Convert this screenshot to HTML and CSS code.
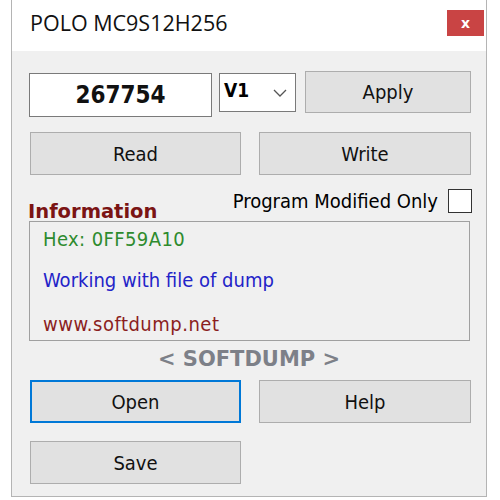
FILE: index.html
```html
<!DOCTYPE html>
<html>
<head>
<meta charset="utf-8">
<link rel="stylesheet" href="styles.css">
</head>
<body>
<div class="window">
  <div class="titlebar">
    <span class="title">POLO MC9S12H256</span>
    <span class="close">x</span>
  </div>
  <div class="content">
    <div class="row1">
      <div class="code">267754</div>
      <div class="select"><span>V1</span>
        <svg width="14" height="8" viewBox="0 0 14 8"><path d="M1 1 L7 7 L13 1" fill="none" stroke="#555" stroke-width="1.3"/></svg>
      </div>
      <div class="btn apply">Apply</div>
    </div>
    <div class="row2">
      <div class="btn">Read</div>
      <div class="btn">Write</div>
    </div>
    <div class="optrow">
      <span class="optlabel">Program Modified Only</span>
      <span class="check"></span>
    </div>
    <div class="info">
      <span class="infolabel">Information</span>
      <div class="infobox">
        <div class="hex">Hex: 0FF59A10</div>
        <div class="msg">Working with file of dump</div>
        <div class="url">www.softdump.net</div>
      </div>
    </div>
    <div class="brand">&lt; SOFTDUMP &gt;</div>
    <div class="row2 rowopen">
      <div class="btn focus">Open</div>
      <div class="btn">Help</div>
    </div>
    <div class="row2 rowsave">
      <div class="btn">Save</div>
    </div>
  </div>
</div>
</body>
</html>
```
FILE: styles.css
```css
html, body {
  margin: 0;
  padding: 0;
  background: #ffffff;
}
body {
  font-family: "DejaVu Sans Condensed", "DejaVu Sans", sans-serif;
  color: #000;
}
.window {
  margin-left: 11px;
  width: 474px;
  height: 496px;
  border: 1px solid #b4b4b4;
  border-top: none;
  background: #f0f0f0;
  display: flex;
  flex-direction: column;
}
.titlebar {
  height: 51px;
  background: #ffffff;
  display: flex;
  align-items: flex-start;
  justify-content: space-between;
}
.title {
  font-family: "Open Sans", "Noto Sans", sans-serif;
  font-size: 21.5px;
  margin-left: 18px;
  margin-top: 8px;
  color: #111;
}
.close {
  width: 37px;
  height: 26px;
  margin-top: 10px;
  margin-right: 2px;
  background: #c94444;
  color: #fff;
  font-family: "DejaVu Sans", sans-serif;
  font-weight: bold;
  font-size: 14px;
  display: flex;
  align-items: center;
  justify-content: center;
}
.content {
  padding: 20px 15px 0 17px;
}
.row1 {
  display: flex;
  align-items: flex-start;
  height: 46px;
}
.code {
  width: 181px;
  height: 42px;
  margin-top: 2px;
  background: #fff;
  border: 1px solid #7a7a7a;
  display: flex;
  align-items: center;
  justify-content: center;
  font-weight: bold;
  font-size: 24px;
  color: #111;
}
.select {
  margin-top: 2px;
  margin-left: 7px;
  background: #fff;
  border: 1px solid #7a7a7a;
  display: flex;
  align-items: center;
  justify-content: space-between;
  padding: 0 8px 0 4px;
  box-sizing: border-box;
  width: 77px;
  height: 39px;
  font-weight: bold;
  font-size: 19px;
}
.select span { margin-top: -6px; }
.btn {
  background: #e1e1e1;
  border: 1px solid #adadad;
  box-sizing: border-box;
  height: 43px;
  display: flex;
  align-items: center;
  justify-content: center;
  font-size: 20px;
  color: #111;
}
.apply {
  width: 166px;
  height: 42px;
  margin-left: 9px;
}
.row2 {
  display: grid;
  grid-template-columns: 211px 212px;
  column-gap: 18px;
  margin-top: 15px;
  margin-left: 1px;
}
.optrow {
  display: flex;
  justify-content: flex-end;
  align-items: center;
  margin-top: 14px;
  height: 24px;
  margin-right: -1px;
}
.optlabel {
  font-size: 20px;
  margin-right: 10px;
}
.check {
  width: 22px;
  height: 22px;
  background: #fff;
  border: 1px solid #333;
}
.info {
  position: relative;
  margin-top: 8px;
}
.infolabel {
  position: absolute;
  left: -1px;
  top: -19px;
  font-weight: bold;
  font-size: 19.5px;
  color: #7b1414;
  font-family: "DejaVu Sans", sans-serif;
  background: #f0f0f0;
  line-height: 19px;
}
.infobox {
  border: 1px solid #a0a0a0;
  height: 120px;
  width: 441px;
  box-sizing: border-box;
  padding: 6px 0 0 13px;
  font-size: 20px;
  line-height: 22px;
}
.hex { color: #2e8b2e; letter-spacing: 0.4px; }
.msg { color: #2323c8; margin-top: 19px; }
.url { color: #8b1e1e; margin-top: 22px; letter-spacing: 0.5px; }
.brand {
  text-align: center;
  font-family: "DejaVu Sans", sans-serif;
  font-weight: bold;
  font-size: 21px;
  color: #7d8088;
  margin-top: 6px;
  height: 24px;
  line-height: 24px;
  margin-left: -2px;
}
.rowopen { margin-top: 9px; }
.rowsave { margin-top: 18px; }
.focus {
  border: 2px solid #0078d7;
}
```
